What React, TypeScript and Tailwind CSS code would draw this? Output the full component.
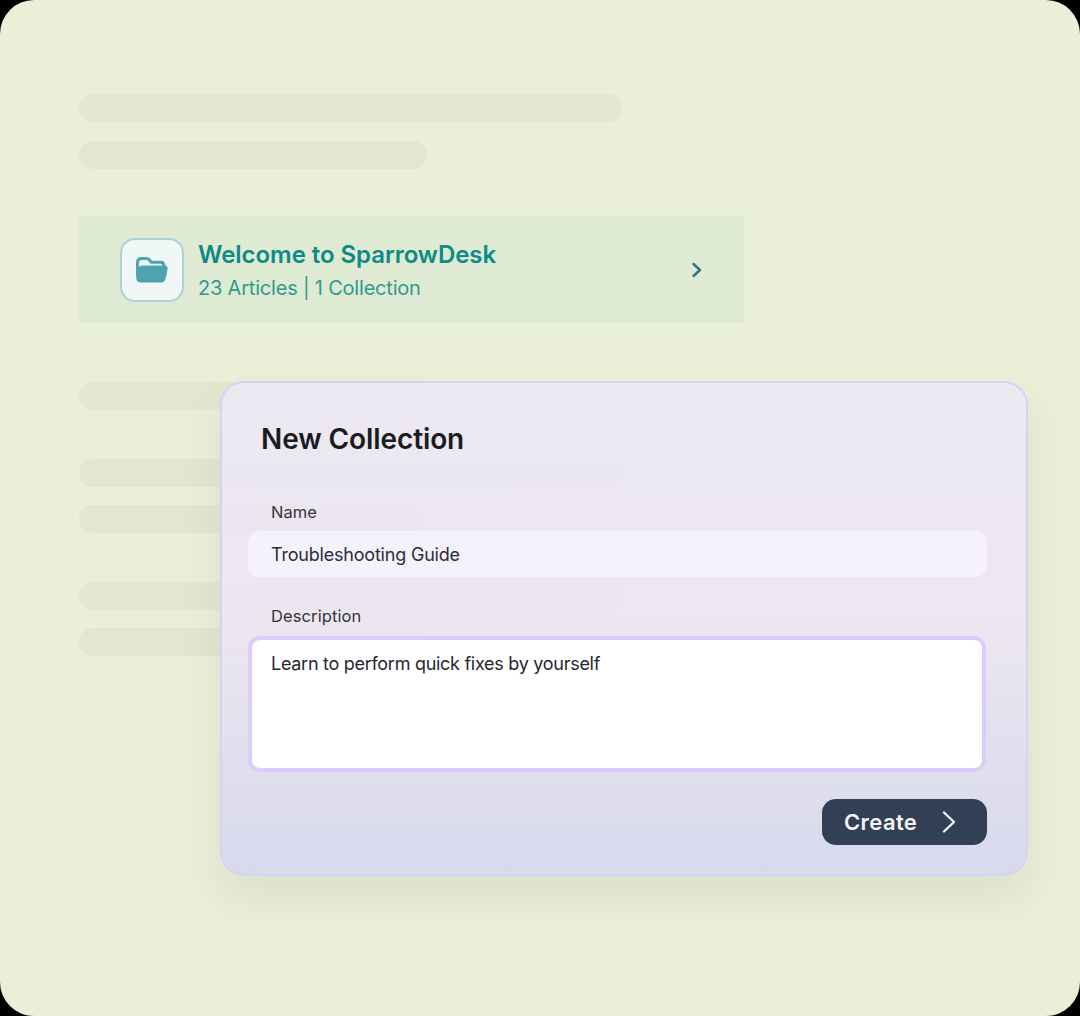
import React from "react";

const font = { fontFamily: '"Inter", "Liberation Sans", sans-serif' };

function Bar({ className }: { className: string }) {
  return <div className={`h-[28px] rounded-[14px] bg-[#e2e7d0] ${className}`} />;
}

function FolderIcon() {
  return (
    <svg width="34" height="28" viewBox="0 0 34 28" fill="none">
      <path d="M2.5 20V6.5C2.5 4 4 2.5 6.5 2.5H11.5C13 2.5 14 3.2 14.8 4.4L16 6.2H25.5C27.5 6.2 28.7 7.3 29 9.2" stroke="#4fa3af" strokeWidth="3" strokeLinecap="round" strokeLinejoin="round" />
      <path d="M7.6 9.6H29.6C31.8 9.6 33 11.2 32.6 13.2L30.6 22.8C30.1 25 28.6 26.4 26.4 26.4H5.5C2.9 26.4 1.1 24.4 1.4 22L2.6 14C3 11.2 5 9.6 7.6 9.6Z" fill="#4fa3af" />
    </svg>
  );
}

export default function App() {
  return (
    <div className="w-[1080px] h-[1016px] bg-black overflow-hidden" style={font}>
      <div className="relative w-full h-full rounded-[34px] bg-[#eaf0d8] pt-[94px] pl-[79px]">
        <div className="flex flex-col gap-[19px]">
          <Bar className="w-[543px]" />
          <Bar className="w-[348px]" />
        </div>

        <div className="mt-[47px] w-[665px] h-[107px] bg-[#deead2] flex items-center pl-[41px] pr-[40px]">
          <div className="w-[64px] h-[64px] rounded-[15px] bg-[#eff8f6] border-2 border-[#a9d3d6] flex items-center justify-center shrink-0">
            <FolderIcon />
          </div>
          <div className="ml-[14px] flex flex-col flex-1 pt-[2px]">
            <span className="text-[24px] leading-[28px] font-semibold text-[#0d8a87] tracking-[-0.05px]">Welcome to SparrowDesk</span>
            <span className="mt-[6px] text-[20px] leading-[26px] text-[#2f9a94] tracking-[-0.2px]">23 Articles | 1 Collection</span>
          </div>
          <svg width="14" height="18" viewBox="0 0 14 18" fill="none">
            <path d="M3.5 3L10 9L3.5 15" stroke="#2f7480" strokeWidth="2.4" strokeLinecap="round" strokeLinejoin="round" />
          </svg>
        </div>

        <div className="mt-[59px] flex flex-col">
          <Bar className="w-[348px]" />
          <Bar className="w-[545px] mt-[49px]" />
          <Bar className="w-[348px] mt-[18px]" />
          <Bar className="w-[543px] mt-[49px]" />
          <Bar className="w-[348px] mt-[18px]" />
        </div>

        <div className="absolute left-[220px] top-[381px] w-[808px] h-[495px] rounded-[24px] border-2 border-[#dccff5] bg-gradient-to-b from-[#ede8f6dd] via-[#ece5f4e0] to-[#d6d8eef5] shadow-[0_20px_40px_rgba(90,90,60,0.10)] pt-[38px] pl-[26px] pr-[38px]">
          <h2 className="pl-[13px] text-[28px] leading-[36px] font-semibold text-[#1b1c22] tracking-[-0.1px]">New Collection</h2>
          <div className="pl-[23px] mt-[43px] text-[16.5px] leading-[24px] text-[#33343c]">Name</div>
          <div className="mt-[7px] h-[46px] w-[739px] rounded-[12px] bg-[#f5f2fe] flex items-center pl-[23px] text-[18px] text-[#2c2d38] tracking-[-0.2px]">Troubleshooting Guide</div>
          <div className="pl-[23px] mt-[27px] text-[16.5px] leading-[24px] text-[#33343c] tracking-[0.1px]">Description</div>
          <div className="mt-[8px] h-[136px] w-[738px] rounded-[12px] border-[4px] border-[#ddcbfb] bg-white pl-[19px] pt-[10px] text-[18px] leading-[28px] text-[#26272f] tracking-[-0.28px]">Learn to perform quick fixes by yourself</div>
          <div className="mt-[27px] flex justify-end w-[739px]">
            <div className="w-[165px] h-[46px] rounded-[14px] bg-[#323f54] flex items-center pl-[22px] text-[22px] font-semibold text-[#f2f4f8] tracking-[0.4px]">
              <span>Create</span>
              <svg className="ml-[24px]" width="16" height="26" viewBox="0 0 16 26" fill="none">
                <path d="M3 3.5L13 13L3 22.5" stroke="#f2f4f8" strokeWidth="2.4" strokeLinecap="round" strokeLinejoin="round" />
              </svg>
            </div>
          </div>
        </div>
      </div>
    </div>
  );
}
